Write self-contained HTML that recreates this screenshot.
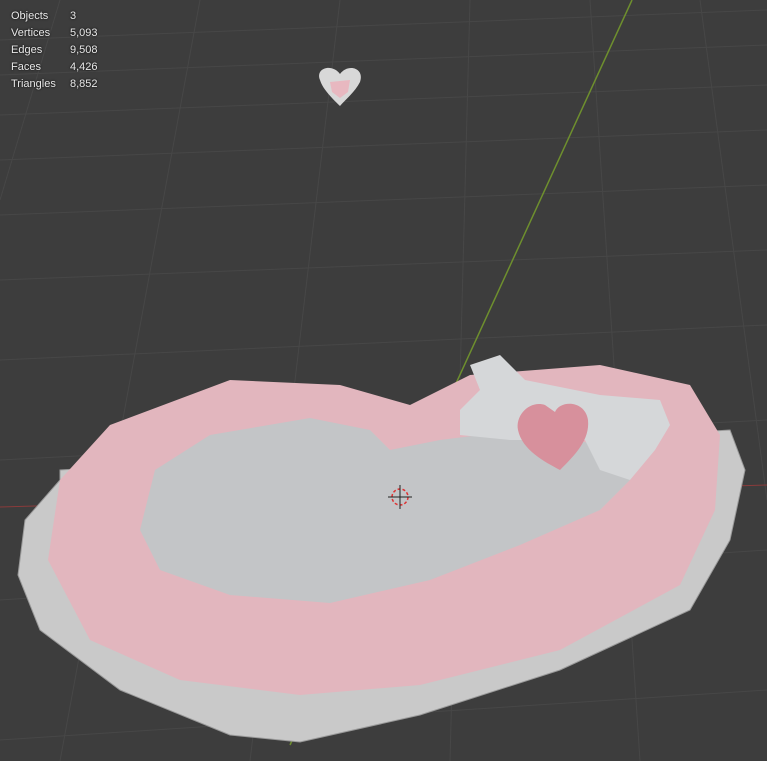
<!DOCTYPE html><html><head><style>
html,body{margin:0;padding:0;background:#3d3d3d;width:767px;height:761px;overflow:hidden}
.st{position:absolute;left:11px;top:8px;font:11px "Liberation Sans",sans-serif;color:#e8e8e8;line-height:17px;text-shadow:0 0 2px #000}
.st span{display:inline-block;width:59px}
</style></head><body>
<svg width="767" height="761" style="position:absolute;left:0;top:0">
<g stroke="#474747" stroke-width="1" fill="none">
<path d="M0 40 L767 10"/><path d="M0 75 L767 45"/><path d="M0 115 L767 85"/><path d="M0 160 L767 130"/><path d="M0 215 L767 185"/><path d="M0 280 L767 250"/><path d="M0 360 L767 325"/><path d="M0 460 L767 420"/><path d="M0 600 L767 550"/><path d="M0 740 L767 690"/>
<path d="M60 0 L0 200"/><path d="M200 0 L60 761"/><path d="M340 0 L250 761"/><path d="M470 0 L450 761"/><path d="M590 0 L640 761"/><path d="M700 0 L767 500"/>
</g>
<path d="M0 507 L767 485" stroke="#8a3b3b" stroke-width="1"/>
<path d="M632 0 L290 745" stroke="#6e8f2e" stroke-width="1.5"/>
<path d="M18 575 L25 520 L60 480 L60 470 L730 430 L745 470 L730 540 L690 610 L560 670 L420 715 L300 742 L230 735 L120 690 L40 630 Z" fill="#c9c9c9" stroke="#9a9a9a"/>
<path d="M48 560 L60 480 L110 425 L230 380 L340 385 L410 405 L470 375 L600 365 L690 385 L720 435 L715 510 L680 585 L560 650 L420 685 L300 695 L180 680 L90 640 Z" fill="#e2b6be"/>
<path d="M140 530 L155 470 L210 435 L310 418 L370 430 L390 450 L440 440 L520 430 L600 445 L630 480 L600 510 L520 545 L430 580 L330 603 L230 595 L160 570 Z" fill="#c3c5c7"/>
<path d="M460 410 L480 390 L470 365 L500 355 L525 380 L600 395 L660 400 L670 425 L655 450 L630 480 L600 470 L585 440 L510 440 L460 435 Z" fill="#d5d7d9"/>
<path d="M545 405 C530 400 515 415 518 430 C522 450 545 462 560 470 C575 455 590 440 588 420 C585 400 560 400 555 412 Z" fill="#d7909c"/>
<path d="M320 80 C315 68 332 63 340 74 C348 63 365 68 360 82 C355 92 345 100 340 106 C334 100 323 90 320 80 Z" fill="#d8d8d8"/>
<path d="M330 82 L350 80 L348 92 L340 98 L332 92 Z" fill="#e8b8c0"/>
<circle cx="400" cy="497" r="8" fill="none" stroke="#d33" stroke-width="1.5" stroke-dasharray="3 2"/>
<path d="M388 497 H412 M400 485 V509" stroke="#222" stroke-width="1"/>
</svg>
<div class="st"><span>Objects</span>3<br><span>Vertices</span>5,093<br><span>Edges</span>9,508<br><span>Faces</span>4,426<br><span>Triangles</span>8,852</div>
</body></html>
